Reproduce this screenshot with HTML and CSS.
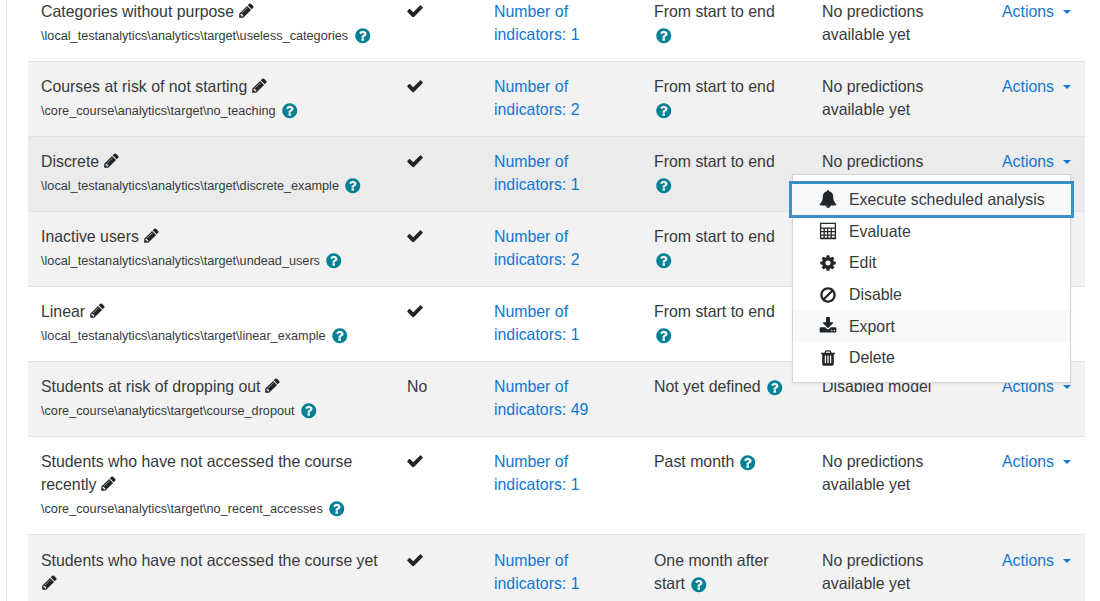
FILE: index.html
```html
<!DOCTYPE html>
<html lang="en">
<head>
<meta charset="utf-8">
<title>Analytics models</title>
<link rel="stylesheet" href="styles.css">
</head>
<body>
<svg class="defs" width="0" height="0" aria-hidden="true">
<symbol id="i-check" viewBox="0 0 1792 1792"><path d="M1671 566q0 40-28 68l-724 724-136 136q-28 28-68 28t-68-28l-136-136-362-362q-28-28-28-68t28-68l136-136q28-28 68-28t68 28l294 295 656-657q28-28 68-28t68 28l136 136q28 28 28 68z"/></symbol>
<symbol id="i-pencil" viewBox="0 0 1792 1792"><path d="M491 1536l91-91-235-235-91 91v107h128v128h107zm523-928q0-22-22-22-10 0-17 7l-542 542q-7 7-7 17 0 22 22 22 10 0 17-7l542-542q7-7 7-17zm-54-192l416 416-832 832h-416v-416zm683 96q0 53-37 90l-166 166-416-416 166-165q36-38 90-38 53 0 91 38l235 234q37 39 37 91z"/></symbol>
<symbol id="i-help" viewBox="0 0 1792 1792"><path d="M1024 1376v-192q0-14-9-23t-23-9h-192q-14 0-23 9t-9 23v192q0 14 9 23t23 9h192q14 0 23-9t9-23zm256-672q0-88-55.5-163t-138.5-116-170-41q-243 0-371 213-15 24 8 42l132 100q7 6 19 6 16 0 25-12 53-68 86-92 34-24 86-24 48 0 85.5 26t37.5 59q0 38-20 61t-68 45q-63 28-115.5 86.5t-52.5 125.5v36q0 14 9 23t23 9h192q14 0 23-9t9-23q0-19 21.5-49.5t54.5-49.5q32-18 49-28.5t46-35 44.5-48 28-60.5 12.5-81zm384 192q0 209-103 385.5t-279.5 279.5-385.5 103-385.5-103-279.5-279.5-103-385.5 103-385.5 279.5-279.5 385.5-103 385.5 103 279.5 279.5 103 385.5z"/></symbol>
<symbol id="i-bell" viewBox="0 0 1792 1792"><path d="M912 1696q0-16-16-16-59 0-101.5-42.5t-42.5-101.5q0-16-16-16t-16 16q0 73 51.5 124.5t124.5 51.5q16 0 16-16zm816-288q0 52-38 90t-90 38h-448q0 106-75 181t-181 75-181-75-75-181h-448q-52 0-90-38t-38-90q50-42 91-88t85-119.5 74.5-158.5 50-206 19.5-260q0-152 117-282.5t307-158.5q-8-19-8-39 0-40 28-68t68-28 68 28 28 68q0 20-8 39 190 28 307 158.5t117 282.5q0 139 19.5 260t50 206 74.5 158.5 85 119.5 91 88z"/></symbol>
<symbol id="i-calc" viewBox="0 0 1792 1792"><path fill-rule="evenodd" d="M160 64h1472q64 0 64 64v1536q0 64-64 64h-1472q-64 0-64-64v-1536q0-64 64-64zm64 128v352h1344v-352zm0 480v224h224v-224zm352 0v224h224v-224zm352 0v224h224v-224zm352 0v224h288v-224zm-1056 352v224h224v-224zm352 0v224h224v-224zm352 0v224h224v-224zm352 0v224h288v-224zm-1056 352v160h224v-160zm352 0v160h224v-160zm352 0v160h224v-160zm352 0v160h288v-160z"/></symbol>
<symbol id="i-cog" viewBox="0 0 1792 1792"><path d="M1152 896q0-106-75-181t-181-75-181 75-75 181 75 181 181 75 181-75 75-181zm512-109v222q0 12-8 23t-20 13l-185 28q-19 54-39 91 35 50 107 138 10 12 10 25t-9 23q-27 37-99 108t-94 71q-12 0-26-9l-138-108q-44 23-91 38-16 136-29 186-7 28-36 28h-222q-14 0-24.5-8.5t-11.5-21.5l-28-184q-49-16-90-37l-141 107q-10 9-25 9-14 0-25-11-126-114-165-168-7-10-7-23 0-12 8-23 15-21 51-66.5t54-70.5q-27-50-41-99l-183-27q-13-2-21-12.5t-8-23.5v-222q0-12 8-23t19-13l186-28q14-46 39-92-40-57-107-138-10-12-10-24 0-10 9-23 26-36 98.5-107.5t94.5-71.5q13 0 26 10l138 107q44-23 91-38 16-136 29-186 7-28 36-28h222q14 0 24.5 8.5t11.5 21.5l28 184q49 16 90 37l142-107q9-9 24-9 13 0 25 10 129 119 165 170 7 8 7 22 0 12-8 23-15 21-51 66.5t-54 70.5q26 50 41 98l183 28q13 2 21 12.5t8 23.5z"/></symbol>
<symbol id="i-ban" viewBox="0 0 1792 1792"><path d="M1440 893q0-161-87-295l-754 753q137 89 297 89 111 0 211.5-43.5t173.5-116.5 116-174.5 43-212.5zm-999 299l755-754q-135-91-300-91-148 0-273 73t-198 199-73 274q0 162 89 299zm1223-299q0 157-61 300t-163.5 246-245 164-298.5 61-298.5-61-245-164-163.5-246-61-300 61-299.5 163.5-245.5 245-164 298.5-61 298.5 61 245 164 163.5 245.5 61 299.5z"/></symbol>
<symbol id="i-download" viewBox="0 0 1792 1792"><path d="M1344 1344q0-26-19-45t-45-19-45 19-19 45 19 45 45 19 45-19 19-45zm256 0q0-26-19-45t-45-19-45 19-19 45 19 45 45 19 45-19 19-45zm128-224v320q0 40-28 68t-68 28h-1472q-40 0-68-28t-28-68v-320q0-40 28-68t68-28h465l135 136q58 56 136 56t136-56l136-136h464q40 0 68 28t28 68zm-325-569q17 41-14 70l-448 448q-18 19-45 19t-45-19l-448-448q-31-29-14-70 17-39 59-39h256v-448q0-26 19-45t45-19h256q26 0 45 19t19 45v448h256q42 0 59 39z"/></symbol>
<symbol id="i-trash" viewBox="0 0 1792 1792"><path d="M704 1376v-704q0-14-9-23t-23-9h-64q-14 0-23 9t-9 23v704q0 14 9 23t23 9h64q14 0 23-9t9-23zm256 0v-704q0-14-9-23t-23-9h-64q-14 0-23 9t-9 23v704q0 14 9 23t23 9h64q14 0 23-9t9-23zm256 0v-704q0-14-9-23t-23-9h-64q-14 0-23 9t-9 23v704q0 14 9 23t23 9h64q14 0 23-9t9-23zm-544-992h448l-48-117q-7-9-17-11h-317q-10 2-17 11zm928 32v64q0 14-9 23t-23 9h-96v948q0 83-47 143.5t-113 60.5h-832q-66 0-113-58.5t-47-141.5v-952h-96q-14 0-23-9t-9-23v-64q0-14 9-23t23-9h309l70-167q15-37 54-63t79-26h320q40 0 79 26t54 63l70 167h309q14 0 23 9t9 23z"/></symbol>
</svg>
<main class="page">
<table class="models">
<colgroup><col class="c1"><col class="c2"><col class="c3"><col class="c4"><col class="c5"><col class="c6"></colgroup>
<tbody>
<tr class="first">
<td><span>Categories without purpose</span> <svg class="ico pencil"><use href="#i-pencil"/></svg><div class="target"><span>\local_testanalytics\analytics\target\useless_categories</span><svg class="ico help"><use href="#i-help"/></svg></div></td>
<td><svg class="ico check"><use href="#i-check"/></svg></td>
<td><a href="#">Number of indicators: 1</a></td>
<td>From start to end <svg class="ico help"><use href="#i-help"/></svg></td>
<td>No predictions available yet</td>
<td><a class="actions" href="#">Actions</a></td>
</tr>
<tr>
<td><span>Courses at risk of not starting</span> <svg class="ico pencil"><use href="#i-pencil"/></svg><div class="target"><span>\core_course\analytics\target\no_teaching</span><svg class="ico help"><use href="#i-help"/></svg></div></td>
<td><svg class="ico check"><use href="#i-check"/></svg></td>
<td><a href="#">Number of indicators: 2</a></td>
<td>From start to end <svg class="ico help"><use href="#i-help"/></svg></td>
<td>No predictions available yet</td>
<td><a class="actions" href="#">Actions</a></td>
</tr>
<tr class="hover">
<td><span>Discrete</span> <svg class="ico pencil"><use href="#i-pencil"/></svg><div class="target"><span>\local_testanalytics\analytics\target\discrete_example</span><svg class="ico help"><use href="#i-help"/></svg></div></td>
<td><svg class="ico check"><use href="#i-check"/></svg></td>
<td><a href="#">Number of indicators: 1</a></td>
<td>From start to end <svg class="ico help"><use href="#i-help"/></svg></td>
<td>No predictions available yet</td>
<td class="anchor"><a class="actions" href="#">Actions</a>
<ul class="menu">
<li class="focus"><svg class="ico mi"><use href="#i-bell"/></svg>Execute scheduled analysis</li>
<li><svg class="ico mi"><use href="#i-calc"/></svg>Evaluate</li>
<li><svg class="ico mi"><use href="#i-cog"/></svg>Edit</li>
<li><svg class="ico mi"><use href="#i-ban"/></svg>Disable</li>
<li class="hl"><svg class="ico mi"><use href="#i-download"/></svg>Export</li>
<li><svg class="ico mi"><use href="#i-trash"/></svg>Delete</li>
</ul></td>
</tr>
<tr>
<td><span>Inactive users</span> <svg class="ico pencil"><use href="#i-pencil"/></svg><div class="target"><span>\local_testanalytics\analytics\target\undead_users</span><svg class="ico help"><use href="#i-help"/></svg></div></td>
<td><svg class="ico check"><use href="#i-check"/></svg></td>
<td><a href="#">Number of indicators: 2</a></td>
<td>From start to end <svg class="ico help"><use href="#i-help"/></svg></td>
<td>No predictions available yet</td>
<td><a class="actions" href="#">Actions</a></td>
</tr>
<tr>
<td><span>Linear</span> <svg class="ico pencil"><use href="#i-pencil"/></svg><div class="target"><span>\local_testanalytics\analytics\target\linear_example</span><svg class="ico help"><use href="#i-help"/></svg></div></td>
<td><svg class="ico check"><use href="#i-check"/></svg></td>
<td><a href="#">Number of indicators: 1</a></td>
<td>From start to end <svg class="ico help"><use href="#i-help"/></svg></td>
<td>No predictions available yet</td>
<td><a class="actions" href="#">Actions</a></td>
</tr>
<tr>
<td><span>Students at risk of dropping out</span> <svg class="ico pencil"><use href="#i-pencil"/></svg><div class="target"><span>\core_course\analytics\target\course_dropout</span><svg class="ico help"><use href="#i-help"/></svg></div></td>
<td>No</td>
<td><a href="#">Number of indicators: 49</a></td>
<td>Not yet defined <svg class="ico help"><use href="#i-help"/></svg></td>
<td>Disabled model</td>
<td><a class="actions" href="#">Actions</a></td>
</tr>
<tr>
<td><span>Students who have not accessed the course recently</span> <svg class="ico pencil"><use href="#i-pencil"/></svg><div class="target"><span>\core_course\analytics\target\no_recent_accesses</span><svg class="ico help"><use href="#i-help"/></svg></div></td>
<td><svg class="ico check"><use href="#i-check"/></svg></td>
<td><a href="#">Number of indicators: 1</a></td>
<td>Past month <svg class="ico help"><use href="#i-help"/></svg></td>
<td>No predictions available yet</td>
<td><a class="actions" href="#">Actions</a></td>
</tr>
<tr class="last">
<td><span>Students who have not accessed the course yet</span> <svg class="ico pencil"><use href="#i-pencil"/></svg></td>
<td><svg class="ico check"><use href="#i-check"/></svg></td>
<td><a href="#">Number of indicators: 1</a></td>
<td>One month after start <svg class="ico help"><use href="#i-help"/></svg></td>
<td>No predictions available yet</td>
<td><a class="actions" href="#">Actions</a></td>
</tr>
</tbody>
</table>
</main>
</body>
</html>
```

FILE: styles.css
```css
html, body {
  margin: 0;
  padding: 0;
  height: 601px;
  overflow: hidden;
  background: #fff;
}
.defs { position: absolute; }
.page {
  height: 601px;
  margin-left: 6px;
  padding-left: 21px;
  border-left: 1px solid #e3e3e3;
  overflow: hidden;
  font-family: "Liberation Sans", Arial, sans-serif;
  font-size: 15.86px;
  line-height: 23px;
  color: #373a3c;
}
.models {
  width: 1057px;
  margin-top: -13px;
  border-collapse: collapse;
  table-layout: fixed;
}
.c1 { width: 366px; }
.c2 { width: 87px; }
.c3 { width: 160px; }
.c4 { width: 168px; }
.c5 { width: 181px; }
.c6 { width: 95px; }
.models td {
  padding: 13px 11px 12px 13px;
  vertical-align: top;
  border-top: 1px solid #dee2e6;
}
.models td:nth-child(4) { padding-right: 20px; }
.models td:nth-child(6) { padding-left: 12px; padding-right: 12px; }
.models tr.first td { border-top: 0; }
.models tr.last td { padding-top: 14px; }
.models tbody tr:nth-child(even) { background: #f2f2f2; }
.models tbody tr.hover { background: #ebebeb; }
.models a {
  color: #1177d1;
  text-decoration: none;
}
.target {
  display: flex;
  align-items: center;
  gap: 5px;
  height: 26px;
  font-size: 12.68px;
  line-height: 26px;
}
.ico {
  display: inline-block;
  width: 17px;
  height: 17px;
  fill: currentColor;
  vertical-align: -2px;
}
.ico.help { color: #008196; width: 17.5px; height: 17.5px; margin-left: 0.5px; vertical-align: -4px; }
.ico.pencil { color: #212529; margin-left: -0.5px; }
.ico.check { color: #212529; width: 18px; height: 18px; margin-left: -1px; vertical-align: -3px; }
.actions::after {
  content: "";
  display: inline-block;
  margin-left: 8.5px;
  vertical-align: 3px;
  border-top: 4.8px solid currentColor;
  border-left: 4.8px solid transparent;
  border-right: 4.8px solid transparent;
}
.anchor { position: relative; }
.menu {
  position: absolute;
  z-index: 5;
  top: 37px;
  right: 14px;
  width: 277px;
  margin: 0;
  padding: 8.6px 0 8px;
  list-style: none;
  background: #fff;
  border: 1px solid #d5d5d5;
  box-shadow: 0 1px 2px rgba(0, 0, 0, 0.08);
}
.menu li {
  display: flex;
  align-items: center;
  height: 31.7px;
  padding-left: 25.5px;
  line-height: 23px;
  color: #373a3c;
}
.menu li.focus {
  background: #f8f9fa;
  outline: 3px solid #3d8fc9;
  outline-offset: 0;
  margin: 0 -1px;
  padding-left: 26.5px;
  width: calc(100% + 2px);
  box-sizing: border-box;
  position: relative;
}
.menu li.hl { background: #f8f9fa; }
.ico.mi {
  width: 18px;
  height: 18px;
  margin-right: 12.5px;
  color: #212529;
}
```
